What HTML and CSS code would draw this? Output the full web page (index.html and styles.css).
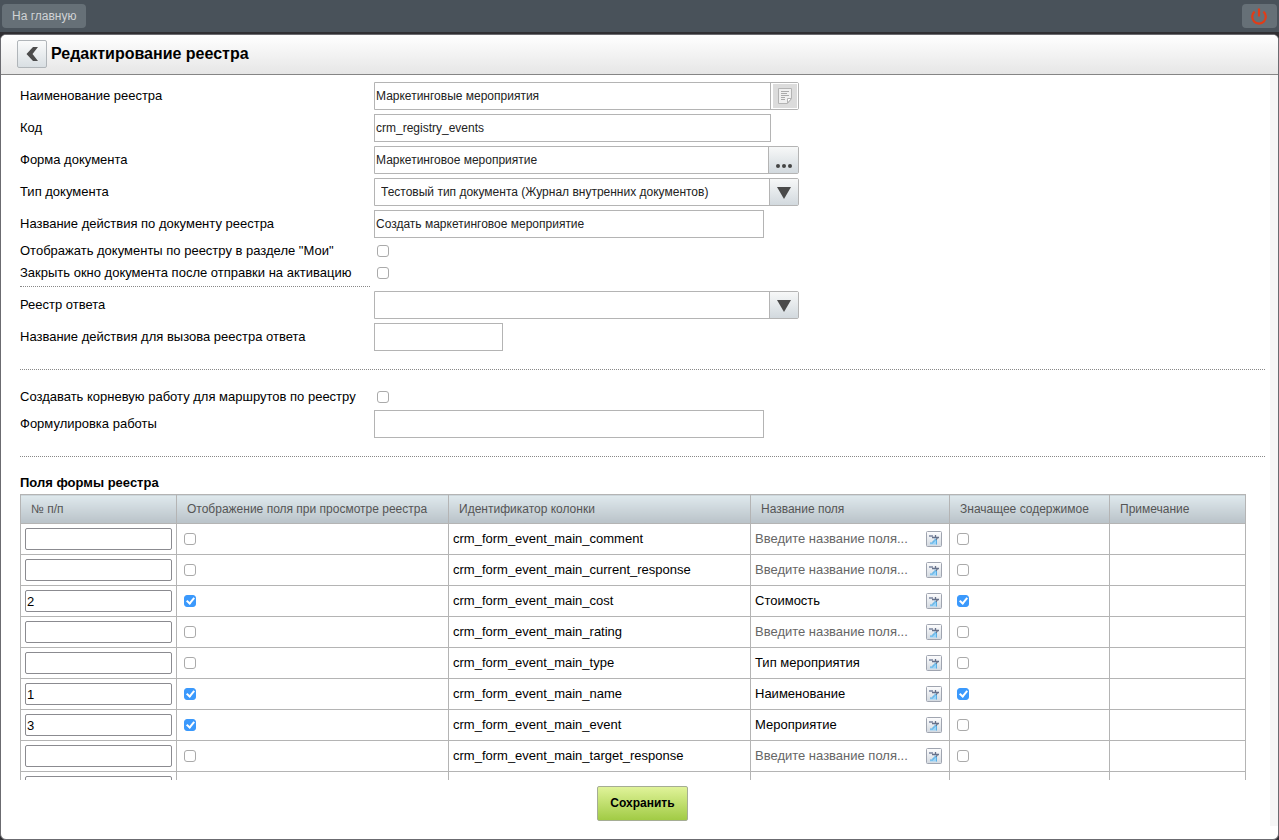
FILE: index.html
```html
<!DOCTYPE html>
<html lang="ru">
<head>
<meta charset="utf-8">
<title>Редактирование реестра</title>
<link rel="stylesheet" href="styles.css">
</head>
<body>
<svg class="defs" aria-hidden="true">
  <defs>
    <linearGradient id="tile" x1="0" y1="0" x2="0" y2="1"><stop offset="0" stop-color="#fdfdfe"/><stop offset="1" stop-color="#d3d9e0"/></linearGradient>
    <symbol id="translate" viewBox="0 0 16 16">
      <rect x=".5" y=".5" width="15" height="15" rx="1" fill="url(#tile)" stroke="#a0a5b0"/>
      <path d="M4 13.500h7V8H9v2H7v2H4z" fill="#9bd4f8"/>
      <path d="M3 4h4v2H3z" fill="#98a1b5"/>
      <path d="M6 6.500h7M9.500 4v3M10 9l2-3" fill="none" stroke="#66718a" stroke-width="1.300"/>
      <path d="M4 12h3v-2h2V7.500M10.500 9v4.500" fill="none" stroke="#58aee4"/>
    </symbol>
  </defs>
</svg>
<header class="topbar">
  <button class="top-btn" type="button">На главную</button>
  <button class="top-btn power" type="button" aria-label="Выход">
    <svg width="18" height="18" viewBox="0 0 18 18"><path d="M4.600 4.600a6.800 6.800 0 1 0 8.800 0M9 1.500v8" fill="none" stroke="#e23c17" stroke-width="2.200"/></svg>
  </button>
</header>
<main class="window">
  <div class="title-bar">
    <button class="back" type="button" aria-label="Назад"><svg width="12" height="14" viewBox="0 0 12 14"><path d="M7 0h5L6.500 7l5.500 7H7L.5 7z" fill="#4c4c4c"/></svg></button>
    <h1>Редактирование реестра</h1>
  </div>
  <div class="content">
    <div class="scroll">
      <form class="fields">
        <div class="row"><label for="name">Наименование реестра</label><div class="control wide"><input id="name" type="text" value="Маркетинговые мероприятия"><button class="side note" type="button" aria-label="Переводы"><svg width="24" height="24" viewBox="0 0 24 24"><path fill="#dcdcdc" d="M0 0h24v24H0z"/><path d="M5.500 4.500h13v10l-4 5h-9z" fill="#f0f0f0" stroke="#b4b4b4"/><path d="M14.500 19v-4.500h4z" fill="#fff" stroke="#b4b4b4"/><path d="M8 7.500h8M8 9.500h6M8 11.500h8M8 13.500h4M8 15.500h4" stroke="#aaa"/></svg></button></div></div>
        <div class="row"><label for="code">Код</label><div class="control code"><input id="code" type="text" value="crm_registry_events"></div></div>
        <div class="row"><label for="form">Форма документа</label><div class="control wide"><input id="form" type="text" value="Маркетинговое мероприятие"><button class="side pick" type="button" aria-label="Выбрать форму"><svg width="16" height="4" viewBox="0 0 16 4"><g fill="#444"><circle cx="2" cy="2" r="2"/><circle cx="8" cy="2" r="2"/><circle cx="14" cy="2" r="2"/></g></svg></button></div></div>
        <div class="row"><label for="type">Тип документа</label><div class="control wide"><select id="type"><option>Тестовый тип документа (Журнал внутренних документов)</option></select><span class="side arrow"><svg width="14" height="12" viewBox="0 0 14 12"><path d="M0 0h14L7 12z" fill="#4a4a4a"/></svg></span></div></div>
        <div class="row"><label for="action">Название действия по документу реестра</label><div class="control medium"><input id="action" type="text" value="Создать маркетинговое мероприятие"></div></div>
        <div class="row check"><label for="mine">Отображать документы по реестру в разделе "Мои"</label><input id="mine" type="checkbox"></div>
        <div class="row check"><label for="close">Закрыть окно документа после отправки на активацию</label><input id="close" type="checkbox"></div>
        <hr class="short">
        <div class="row"><label for="reply">Реестр ответа</label><div class="control wide"><select id="reply"><option></option></select><span class="side arrow"><svg width="14" height="12" viewBox="0 0 14 12"><path d="M0 0h14L7 12z" fill="#4a4a4a"/></svg></span></div></div>
        <div class="row"><label for="reply-action">Название действия для вызова реестра ответа</label><div class="control small"><input id="reply-action" type="text"></div></div>
        <hr>
        <div class="row check"><label for="root">Создавать корневую работу для маршрутов по реестру</label><input id="root" type="checkbox"></div>
        <div class="row"><label for="work">Формулировка работы</label><div class="control medium"><input id="work" type="text"></div></div>
        <hr>
      </form>
      <h2>Поля формы реестра</h2>
      <table>
        <colgroup><col class="c-num"><col class="c-show"><col class="c-id"><col class="c-title"><col class="c-value"><col class="c-remark"></colgroup>
        <thead><tr><th>№ п/п</th><th>Отображение поля при просмотре реестра</th><th>Идентификатор колонки</th><th>Название поля</th><th>Значащее содержимое</th><th>Примечание</th></tr></thead>
        <tbody id="rows"></tbody>
      </table>
    </div>
    <div class="footer"><button class="save" type="button">Сохранить</button></div>
  </div>
</main>
<script src="rows.js"></script>
</body>
</html>
```
FILE: rows.js
```js
const rows = [
  ["", false, "crm_form_event_main_comment", "", false],
  ["", false, "crm_form_event_main_current_response", "", false],
  ["2", true, "crm_form_event_main_cost", "Стоимость", true],
  ["", false, "crm_form_event_main_rating", "", false],
  ["", false, "crm_form_event_main_type", "Тип мероприятия", false],
  ["1", true, "crm_form_event_main_name", "Наименование", true],
  ["3", true, "crm_form_event_main_event", "Мероприятие", false],
  ["", false, "crm_form_event_main_target_response", "", false]
];
const box = (label, on) => `<input type="checkbox" aria-label="${label}"${on ? " checked" : ""}>`;
const num = value => `<input class="num" type="text" aria-label="№ п/п" value="${value}">`;
const filled = rows.map(([n, shown, id, title, main]) => `<tr>
  <td>${num(n)}</td>
  <td>${box("Отображение поля", shown)}</td>
  <td>${id}</td>
  <td><div class="name"><span class="${title ? "" : "empty"}">${title || "Введите название поля..."}</span><button type="button" aria-label="Перевод названия"><svg width="16" height="16"><use href="#translate"/></svg></button></div></td>
  <td>${box("Значащее содержимое", main)}</td>
  <td></td></tr>`).join("");
const blank = `<tr><td>${num("")}</td><td></td><td></td><td></td><td></td><td></td></tr>`;
document.getElementById("rows").innerHTML = filled + blank;
```
FILE: styles.css
```css
* { box-sizing: border-box; }

body {
  margin: 0;
  height: 100vh;
  display: flex;
  flex-direction: column;
  overflow: hidden;
  background: #302f33;
  color: #000;
  font: 13px/16px "Liberation Sans", Arial, sans-serif;
}

button, input, select { font: inherit; margin: 0; }

.defs { position: absolute; width: 0; height: 0; }

.topbar {
  flex: none;
  display: flex;
  align-items: flex-start;
  justify-content: space-between;
  height: 32px;
  padding: 4px 2px;
  background: #49525a;
}

.top-btn {
  height: 24px;
  padding: 0 10px;
  border: 0;
  border-radius: 4px;
  background: #667077;
  color: #d0d3d5;
  font-size: 12px;
}

.power { display: flex; align-items: center; padding: 0 9px 0 8px; }

.window {
  flex: 1;
  min-height: 0;
  display: flex;
  flex-direction: column;
  margin-top: 2px;
  border: 1px solid #6b6b70;
  border-radius: 6px;
  background: #fff;
  overflow: hidden;
}

.title-bar {
  flex: none;
  display: flex;
  align-items: center;
  gap: 4px;
  height: 40px;
  padding: 0 16px 2px;
  border-bottom: 1px solid #858585;
  background: linear-gradient(#fff, #e6e6e6);
}

.back {
  display: flex;
  align-items: center;
  justify-content: center;
  width: 30px;
  height: 28px;
  padding: 0;
  border: 1px solid #b0b5b9;
  border-radius: 2px;
  background: linear-gradient(#fafbfb, #d9dfe3);
}

h1 { margin: 0; font-size: 16px; line-height: 20px; }

.content {
  flex: 1;
  min-height: 0;
  display: flex;
  flex-direction: column;
  margin-bottom: 13px;
  border-right: 8px solid #f6f6f6;
}

.scroll {
  flex: 1;
  min-height: 0;
  padding: 5px 5px 0 19px;
  overflow: hidden;
}

.row { display: flex; align-items: center; height: 32px; }
.row > label { flex: none; width: 354px; }
.row.check { height: 22px; }
.row.check > input { margin-left: 3px; }

.control { display: flex; height: 28px; border: 1px solid #b4b4b4; }
.wide { width: 425px; border-radius: 0 2px 2px 0; }
.code { width: 397px; }
.medium { width: 390px; }
.small { width: 129px; }

.control input, .control select {
  flex: 1;
  min-width: 0;
  padding: 0 1px;
  border: 0;
  border-radius: 0;
  background: #fff;
  color: #222;
  font-size: 12px;
}

.control select { appearance: none; padding-left: 6px; }

.side {
  flex: none;
  display: flex;
  align-items: center;
  justify-content: center;
  width: 29px;
  padding: 0;
  border: 0;
  border-left: 1px solid #b4b4b4;
  background: linear-gradient(#f7f8f8, #d2d9de);
}

.note { width: 28px; background: #fff; }
.pick { width: 30px; padding-top: 12px; }
.arrow { padding-top: 2px; pointer-events: none; }

hr { height: 1px; margin: 16px 0; border: 0; border-top: 1px dotted #888; }
hr.short { width: 350px; margin: 2px 0; }

h2 { margin: 18px 0 3px; font-size: 13px; line-height: 16px; }

table { width: calc(100% - 19px); border-collapse: collapse; table-layout: fixed; }
.c-num { width: 156px; }
.c-show { width: 272px; }
.c-id { width: 302px; }
.c-title { width: 199px; }
.c-value { width: 160px; }

th, td { border: 1px solid #b4b4b4; text-align: left; }
th {
  height: 29px;
  padding: 0 10px;
  background: linear-gradient(#dfe9ed, #b9c2c8);
  color: #555;
  font-size: 12px;
  font-weight: normal;
  white-space: nowrap;
}
td { height: 31px; padding: 0 4px; }

.num {
  display: block;
  width: 100%;
  height: 22px;
  padding: 0 1px;
  border: 1px solid #8b8b90;
  border-radius: 2px;
}

input[type="checkbox"] {
  appearance: none;
  display: flex;
  justify-content: center;
  flex: none;
  width: 12px;
  height: 12px;
  border: 1px solid #aaa;
  border-radius: 3px;
  background: #fff;
}
td input[type="checkbox"] { margin-left: 3px; }
input[type="checkbox"]:checked {
  border-color: #3b99fc;
  background: #3b99fc;
}
input[type="checkbox"]:checked::before {
  content: "";
  box-sizing: border-box;
  width: 5px;
  height: 8px;
  border: solid #fff;
  border-width: 0 2px 2px 0;
  transform: rotate(40deg);
}

.name { display: flex; align-items: center; justify-content: space-between; padding-right: 3px; white-space: nowrap; }
.name button { display: flex; padding: 0; border: 0; background: none; }
.empty { color: #666; }

.footer { flex: none; display: flex; justify-content: center; height: 46px; padding: 6px 0 0 14px; }

.save {
  width: 91px;
  height: 35px;
  padding: 0 0 2px;
  border: 1px solid #a5ad94;
  border-radius: 2px;
  background: linear-gradient(#e0f399, #a1cb45);
  font-size: 12px;
  font-weight: bold;
}
```
